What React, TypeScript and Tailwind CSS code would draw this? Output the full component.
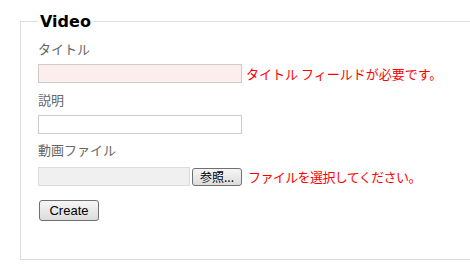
export default function App() {
  const jp = { fontFamily: '"Noto Sans CJK JP", sans-serif' };
  return (
    <div className="w-[470px] h-[275px] overflow-hidden bg-white" style={jp}>
      <fieldset className="ml-[20px] mt-[11px] w-[480px] h-[249px] border border-[#dddddd] pl-[17px] pt-0">
        <legend
          className="px-[2px] pt-[2px] text-[16px] font-bold leading-[18px] text-black"
          style={{ fontFamily: '"DejaVu Sans", sans-serif' }}
        >
          Video
        </legend>
        <div className="flex flex-col text-[13px] leading-[18px]">
          <label className="mt-[9px] text-[#666666]">タイトル</label>
          <div className="mt-[6px] flex items-center">
            <input className="w-[204px] h-[19px] border border-[#cccccc] bg-[#fdeeee] outline-none" />
            <span className="ml-[4px] text-[#ff0000]">タイトル フィールドが必要です。</span>
          </div>
          <label className="mt-[8px] text-[#666666]">説明</label>
          <div className="mt-[6px] flex items-center">
            <input className="w-[204px] h-[19px] border border-[#cccccc] bg-white outline-none" />
          </div>
          <label className="mt-[7px] text-[#666666]">動画ファイル</label>
          <div className="mt-[8px] flex items-center">
            <div className="w-[152px] h-[19px] border border-[#dddddd] bg-[#f0f0f0]" />
            <button className="ml-[2px] w-[50px] h-[18px] rounded-[3px] border border-[#707070] bg-gradient-to-b from-[#f6f6f6] to-[#dcdcdc] text-[12px] leading-[16px] text-black">
              参照...
            </button>
            <span className="ml-[6px] tracking-[-0.6px] text-[#ff0000]">ファイルを選択してください。</span>
          </div>
          <div className="mt-[14px] flex">
            <button
              className="ml-[1px] w-[60px] h-[21px] rounded-[3px] border border-[#707070] bg-gradient-to-b from-[#f6f6f6] to-[#dcdcdc] text-[13px] leading-[19px] text-black"
              style={{ fontFamily: '"Liberation Sans", Arial, sans-serif' }}
            >
              Create
            </button>
          </div>
        </div>
      </fieldset>
    </div>
  );
}
